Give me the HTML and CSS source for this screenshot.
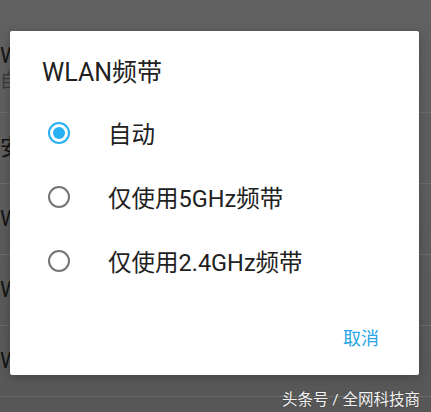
FILE: index.html
```html
<!DOCTYPE html>
<html lang="zh">
<head>
    <meta charset="utf-8">
    <title>WLAN频带</title>
    <link rel="stylesheet" href="styles.css">
</head>
<body>
    <div class="screen">
        <ul class="settings">
            <li class="row row-first">
                <span class="row-title">WLAN+</span>
                <span class="row-sub">自动切换网络</span>
            </li>
            <li class="row"><span class="row-title">安全</span></li>
            <li class="row"><span class="row-title">WPS连接</span></li>
            <li class="row"><span class="row-title">WPS PIN连接</span></li>
            <li class="row"><span class="row-title">WLAN直连</span></li>
        </ul>

        <div class="dialog">
            <h2 class="dialog-title">WLAN频带</h2>
            <div class="options">
                <div class="option">
                    <span class="radio checked"></span>
                    <span class="option-label">自动</span>
                </div>
                <div class="option">
                    <span class="radio"></span>
                    <span class="option-label">仅使用5GHz频带</span>
                </div>
                <div class="option">
                    <span class="radio"></span>
                    <span class="option-label">仅使用2.4GHz频带</span>
                </div>
            </div>
            <div class="actions">
                <span class="btn-cancel">取消</span>
            </div>
        </div>

        <div class="watermark">头条号 / 全网科技商</div>
    </div>
</body>
</html>
```

FILE: styles.css
```css
*{
    margin: 0;
    padding: 0;
    box-sizing: border-box;
}
body{
    background-color: #5c5c5c;
    font-family: Roboto, "Noto Sans CJK SC", sans-serif;
}
.screen{
    position: relative;
    width: 431px;
    height: 412px;
    overflow: hidden;
    background: linear-gradient(to bottom, #616161, #575757);
}

/* dimmed list behind the dialog */
.settings{
    list-style: none;
    padding-top: 42px;
}
.row{
    height: 71px;
    border-bottom: 1px solid #6b6b6b;
    display: flex;
    flex-direction: column;
    justify-content: center;
    color: #141414;
    font-size: 22px;
    line-height: 26px;
}
.row-first{
    justify-content: flex-start;
    padding-top: 1px;
}
.row-sub{
    font-size: 18px;
    color: #3a3a3a;
    line-height: 24px;
}

/* dialog */
.dialog{
    position: absolute;
    left: 10px;
    top: 31px;
    width: 409px;
    height: 344px;
    background-color: #ffffff;
    border-radius: 2px;
    box-shadow: 0 2px 10px rgba(0,0,0,0.25);
    display: flex;
    flex-direction: column;
}
.dialog-title{
    padding: 27px 0 0 32px;
    font-size: 25px;
    font-weight: 400;
    line-height: 30px;
    color: #212121;
}
.options{
    margin-top: 13px;
}
.option{
    height: 64px;
    display: flex;
    align-items: center;
    padding-left: 38px;
}
.radio{
    width: 22px;
    height: 22px;
    border: 2px solid #757575;
    border-radius: 50%;
    display: flex;
    align-items: center;
    justify-content: center;
    flex-shrink: 0;
}
.radio.checked{
    border-color: #29b0f0;
}
.radio.checked::after{
    content: "";
    width: 12px;
    height: 12px;
    border-radius: 50%;
    background-color: #29b0f0;
}
.option-label{
    margin-left: 38px;
    font-size: 23.5px;
    color: #212121;
}
.actions{
    margin-top: auto;
    display: flex;
    justify-content: flex-end;
    padding: 0 40px 25px 0;
}
.btn-cancel{
    font-size: 18px;
    color: #29a6e8;
}

.watermark{
    position: absolute;
    right: 11px;
    bottom: 3px;
    font-size: 15.5px;
    color: #f2f2f2;
    text-shadow: 0 0 2px rgba(0,0,0,0.3);
}
```
